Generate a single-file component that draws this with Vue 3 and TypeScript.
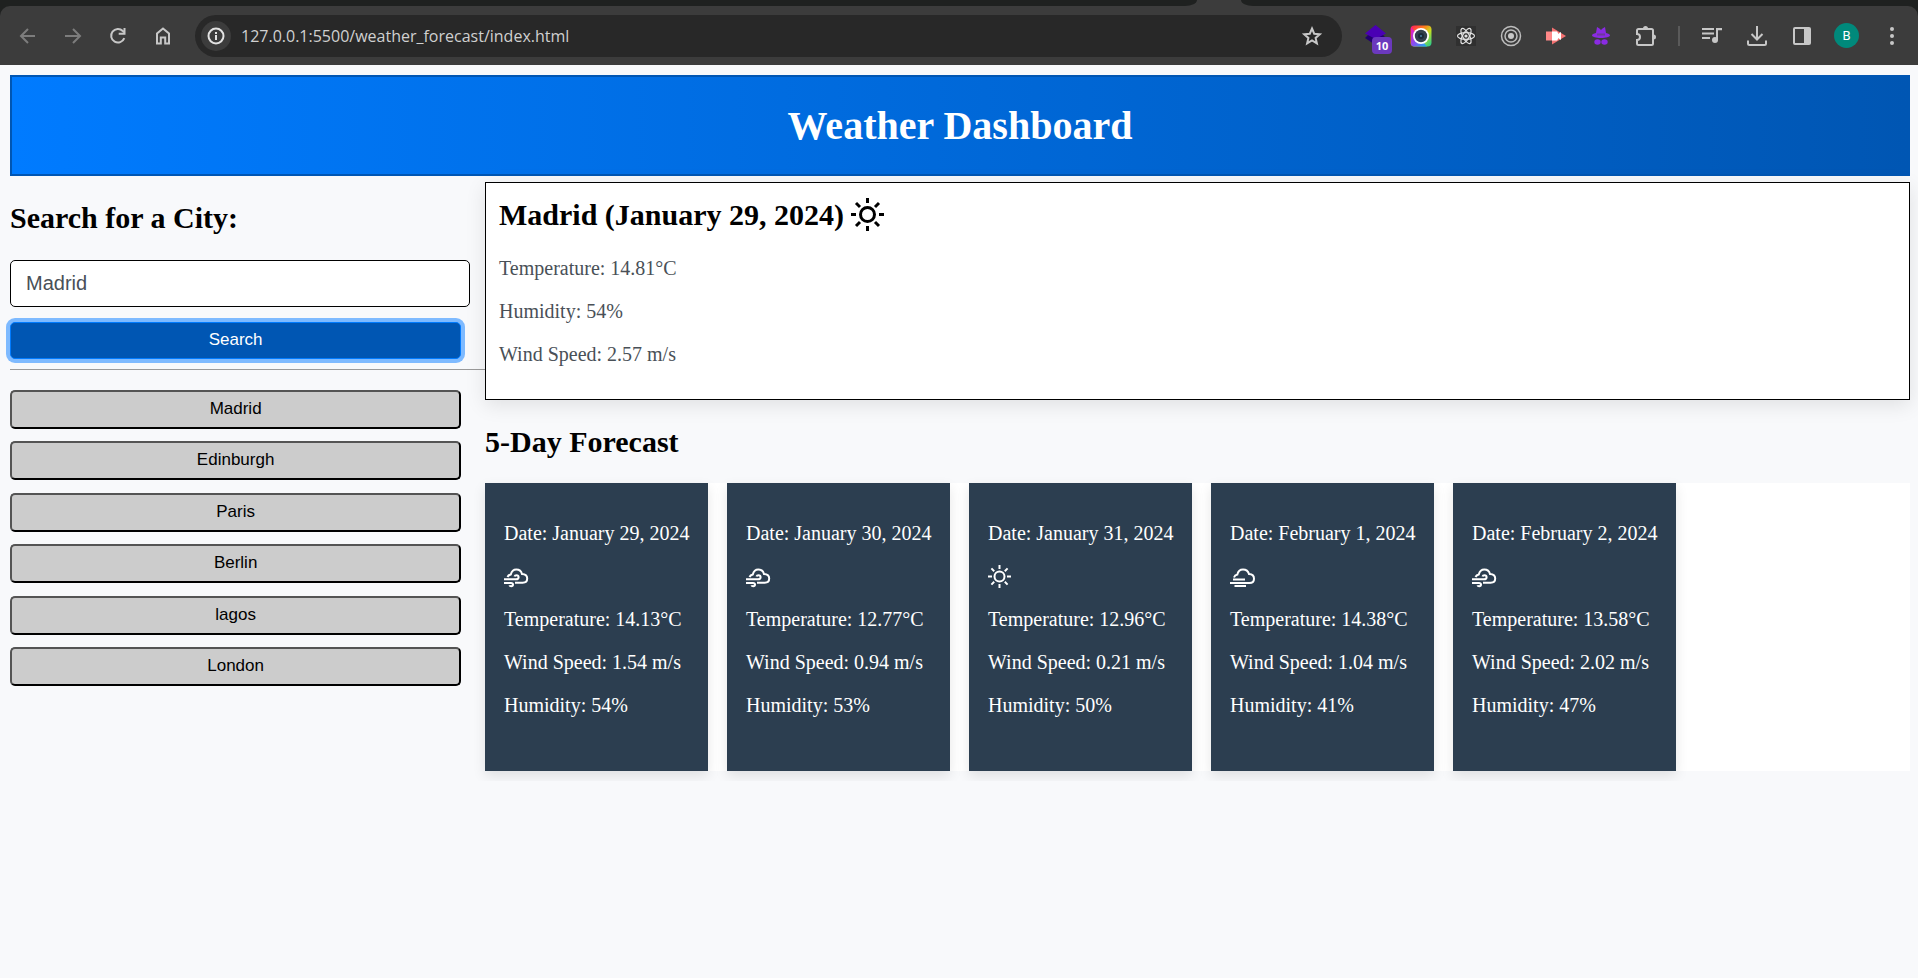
<script setup lang="ts">
import { ref } from 'vue'

type Sky = 'wind' | 'sun' | 'fog'

interface Day {
  date: string
  sky: Sky
  temp: string
  wind: string
  humidity: string
}

const address = ref('127.0.0.1:5500/weather_forecast/index.html')
const city = ref('Madrid')
const history = ref<string[]>(['Madrid', 'Edinburgh', 'Paris', 'Berlin', 'lagos', 'London'])

const days: Day[] = [
  { date: 'January 29, 2024', sky: 'wind', temp: '14.13', wind: '1.54', humidity: '54' },
  { date: 'January 30, 2024', sky: 'wind', temp: '12.77', wind: '0.94', humidity: '53' },
  { date: 'January 31, 2024', sky: 'sun', temp: '12.96', wind: '0.21', humidity: '50' },
  { date: 'February 1, 2024', sky: 'fog', temp: '14.38', wind: '1.04', humidity: '41' },
  { date: 'February 2, 2024', sky: 'wind', temp: '13.58', wind: '2.02', humidity: '47' },
]
</script>

<template>
  <div class="browser">
    <div class="tabs">
      <span class="tabs-left"></span>
      <span class="tabs-right"></span>
    </div>
    <nav class="toolbar" aria-label="Browser toolbar">
      <button class="tool dim" type="button" aria-label="Back">
        <svg width="20" height="20" viewBox="0 0 20 20"><path d="M17 10H3.500M10 3L3 10l7 7" class="line" /></svg>
      </button>
      <button class="tool dim" type="button" aria-label="Forward">
        <svg width="20" height="20" viewBox="0 0 20 20"><path d="M2 10h14.500M10 3l7 7-7 7" class="line" /></svg>
      </button>
      <button class="tool" type="button" aria-label="Reload">
        <svg width="20" height="20" viewBox="0 0 20 20"><path d="M16.300 12.200A6.800 6.800 0 1 1 14.800 5L16 6.200" class="line" /><path d="M17.500 2v6.800h-6.800v-2h4.800V2z" class="fill" /></svg>
      </button>
      <button class="tool" type="button" aria-label="Home">
        <svg width="20" height="20" viewBox="0 0 20 20"><path d="M4 17.500V7.500L10 2.500l6 5v10h-3.800v-6H7.800v6z" class="line" /></svg>
      </button>
      <div class="omnibox">
        <button class="site-info" type="button" aria-label="Site information">
          <svg width="18" height="18" viewBox="0 0 18 18"><circle cx="9" cy="9" r="7.500" class="line" /><path d="M8 8h2v5H8zM8 5h2v2H8z" class="fill" /></svg>
        </button>
        <input v-model="address" class="address" type="text" aria-label="Address" spellcheck="false" />
        <button class="star" type="button" aria-label="Bookmark">
          <svg width="22" height="22" viewBox="0 0 22 22"><path d="M11 3.500l2.200 5.200 5.600.5-4.200 3.700 1.300 5.500L11 15.500l-4.900 2.900 1.300-5.500-4.200-3.700 5.600-.5z" class="line" /></svg>
        </button>
      </div>
      <button class="tool ext" type="button" aria-label="Layers extension">
        <svg width="24" height="20" viewBox="0 0 24 20"><path d="M1 13l3-3h15l3 3-10.500 7z" fill="#22006f" /><path d="M11.500 0L22 8.500 11.500 14 1 8.500z" fill="#4a00b4" /></svg>
        <span class="badge">10</span>
      </button>
      <button class="tool" type="button" aria-label="Screen capture extension">
        <svg width="22" height="22" viewBox="0 0 22 22">
          <defs>
            <linearGradient id="lens-a" x1="0" y1="0" x2="1" y2="1"><stop offset="0" stop-color="#ff1a5e" /><stop offset=".35" stop-color="#ff7a1a" /><stop offset=".6" stop-color="#c6e020" /><stop offset="1" stop-color="#16c99a" /></linearGradient>
            <linearGradient id="lens-b" x1="0" y1="0" x2="1" y2="1"><stop offset="0" stop-color="#ff12b0" /><stop offset=".5" stop-color="#8a4cf0" /><stop offset="1" stop-color="#12b8f0" /></linearGradient>
          </defs>
          <rect x=".5" y=".5" width="21" height="21" rx="4" fill="url(#lens-a)" />
          <path d="M1 2v16.500a3 3 0 0 0 3 3h13z" fill="url(#lens-b)" />
          <circle cx="11" cy="11" r="8" fill="#fff" /><circle cx="11" cy="11" r="6.200" fill="#33404c" /><circle cx="11" cy="11" r="3" fill="#1c2a38" /><circle cx="11" cy="11" r="1" fill="#4a7ea0" />
        </svg>
      </button>
      <button class="tool" type="button" aria-label="React developer tools">
        <svg width="20" height="20" viewBox="0 0 20 20">
          <rect width="20" height="20" fill="#303030" />
          <g fill="none" stroke="#e2e2e2" stroke-width="1.200"><ellipse cx="10" cy="10" rx="8.500" ry="3.300" /><ellipse cx="10" cy="10" rx="8.500" ry="3.300" transform="rotate(60 10 10)" /><ellipse cx="10" cy="10" rx="8.500" ry="3.300" transform="rotate(120 10 10)" /></g>
          <circle cx="10" cy="10" r="1.600" fill="#e2e2e2" />
        </svg>
      </button>
      <button class="tool" type="button" aria-label="Rings extension">
        <svg width="22" height="22" viewBox="0 0 22 22"><g fill="none" stroke="#bdbdbd" stroke-width="1.500"><circle cx="11" cy="11" r="9.500" /><circle cx="11" cy="11" r="6" /></g><circle cx="11" cy="11" r="3" fill="#c8c8c8" /></svg>
      </button>
      <button class="tool" type="button" aria-label="Video extension">
        <svg width="22" height="20" viewBox="0 0 22 20"><path d="M7 1.500L21 10 7 18.500z" fill="#f47272" /><path d="M1 5.500h11v9H1z" fill="#f88" /><path d="M7 5.500h5l1 1.500v6l-1 1.500H7z" fill="#fff" /><path d="M13 8l3-2v8l-3-2z" fill="#fff" /></svg>
      </button>
      <button class="tool" type="button" aria-label="Incognito extension">
        <svg width="20" height="20" viewBox="0 0 20 20"><path d="M6 1l2.500 1.500L10 4l1.500-1.500L14 1l1 6c2.500.6 4 1.400 4 2.300 0 1.700-4 2.700-9 2.700s-9-1-9-2.700C1 8.400 2.500 7.600 5 7z" fill="#8a2be2" /><ellipse cx="6.500" cy="16" rx="3.200" ry="2.700" fill="#8a2be2" /><ellipse cx="13.500" cy="16" rx="3.200" ry="2.700" fill="#8a2be2" /><path d="M6 7.500h8v2H6z" fill="#6d3a9a" /></svg>
      </button>
      <button class="tool" type="button" aria-label="Extensions">
        <svg width="22" height="22" viewBox="0 0 22 22"><path d="M3.500 4h13a1.500 1.500 0 0 1 1.500 1.500v13a1.500 1.500 0 0 1-1.500 1.500h-13A1.500 1.500 0 0 1 2 18.500V15a3 3 0 0 0 0-6V5.500A1.500 1.500 0 0 1 3.500 4z" class="line" /><path d="M8 3.500a2.500 2.500 0 0 1 5 0zM18.500 9.500a2.500 2.500 0 0 1 0 5z" class="fill" /></svg>
      </button>
      <span class="divider"></span>
      <button class="tool" type="button" aria-label="Media controls">
        <svg width="22" height="20" viewBox="0 0 22 20"><path d="M1 3h12M1 7.500h12M1 12h8" class="line" /><path d="M15 2h6v2.200h-4V14h-2z" class="fill" /><circle cx="14" cy="14" r="3" class="fill" /></svg>
      </button>
      <button class="tool" type="button" aria-label="Downloads">
        <svg width="22" height="22" viewBox="0 0 22 22"><path d="M11 1v13M5.500 9l5.500 5.500L16.500 9M2 15.500v3A1.500 1.500 0 0 0 3.500 20h15a1.500 1.500 0 0 0 1.500-1.500v-3" class="line" /></svg>
      </button>
      <button class="tool" type="button" aria-label="Side panel">
        <svg width="20" height="20" viewBox="0 0 20 20"><rect x="2" y="2" width="16" height="16" rx="1" class="line" /><path d="M12 2h6v16h-6z" class="fill" /></svg>
      </button>
      <button class="tool" type="button" aria-label="Profile"><span class="avatar">B</span></button>
      <button class="tool" type="button" aria-label="Menu">
        <svg width="6" height="20" viewBox="0 0 6 20"><circle cx="3" cy="3" r="2" class="fill" /><circle cx="3" cy="10" r="2" class="fill" /><circle cx="3" cy="17" r="2" class="fill" /></svg>
      </button>
    </nav>
  </div>

  <div class="page">
    <header class="banner"><h1>Weather Dashboard</h1></header>
    <div class="columns">
      <aside class="sidebar">
        <form @submit.prevent>
          <h2><label for="city">Search for a City:</label></h2>
          <input id="city" v-model="city" class="city" type="text" />
          <button class="search" type="submit">Search</button>
        </form>
        <hr />
        <div class="history">
          <button v-for="name in history" :key="name" type="button" @click="city = name">{{ name }}</button>
        </div>
      </aside>

      <main class="content">
        <section class="today">
          <h2>
            Madrid (January 29, 2024)
            <svg class="today-icon" width="33" height="33" viewBox="0 0 33 33" fill="none" stroke="currentColor" stroke-width="3" aria-hidden="true">
              <circle cx="16.500" cy="16.500" r="7" /><path d="M16.500 0v5M16.500 28v5M0 16.500h5M28 16.500h5M5 5l4 4M24 24l4 4M28 5l-4 4M9 24l-4 4" />
            </svg>
          </h2>
          <p>Temperature: 14.81°C</p>
          <p>Humidity: 54%</p>
          <p>Wind Speed: 2.57 m/s</p>
        </section>

        <h2 class="forecast-title">5-Day Forecast</h2>
        <section class="forecast">
          <article v-for="day in days" :key="day.date" class="day">
            <p>Date: {{ day.date }}</p>
            <p class="sky">
              <svg v-if="day.sky === 'sun'" width="23" height="23" viewBox="0 0 23 23" aria-hidden="true">
                <circle cx="11.500" cy="11.500" r="5" /><path d="M11.500 0v4M11.500 19v4M0 11.500h4M19 11.500h4M3.400 3.400l2.800 2.800M16.800 16.800l2.800 2.800M19.600 3.400l-2.800 2.800M6.200 16.800l-2.800 2.800" />
              </svg>
              <svg v-else-if="day.sky === 'fog'" width="26" height="20" viewBox="0 0 26 20" aria-hidden="true">
                <path d="M4 9.500C4.500 8 5.500 7 7.300 6.600 8 3.500 10 1.500 13 1.500s5.200 1.600 6 4.600c3 .2 5 2 5 4.600 0 2.700-2 4.300-4.500 4.300H0M3 11.500h12M4.500 18H16" />
              </svg>
              <svg v-else width="26" height="20" viewBox="0 0 26 20" aria-hidden="true">
                <path d="M3.500 9C4.200 7.500 5 6.800 6.800 6.400 7.600 3.300 9.500 1.500 12.300 1.500c3 0 5 1.600 5.700 4.500 3.200.1 5.200 2 5.200 4.500 0 2.600-1.900 4.200-4.500 4.200H11M0 11.300h12c1.800 0 2.600-1 2.600-2.100S13.800 7.200 12.500 7.200c-1 0-1.800.4-2 1.200M0 15h7c1.300 0 2 .6 2 1.600s-.7 1.700-1.800 1.700c-.9 0-1.500-.3-1.700-1" />
              </svg>
            </p>
            <p>Temperature: {{ day.temp }}°C</p>
            <p>Wind Speed: {{ day.wind }} m/s</p>
            <p>Humidity: {{ day.humidity }}%</p>
          </article>
        </section>
      </main>
    </div>
  </div>
</template>

<style>
body {
  margin: 0;
  background: #f8f9fb;
}
</style>

<style scoped>
* {
  box-sizing: border-box;
}
button,
input {
  font-family: "Liberation Sans", Arial, sans-serif;
}

/* Browser chrome */
.browser {
  background: #1f2120;
  font-family: "Open Sans", sans-serif;
}
.tabs {
  display: flex;
  height: 6px;
  background: #3c3c3c;
}
.tabs-left,
.tabs-right {
  background: #1f2120;
}
.tabs-left {
  flex: 1197;
  border-bottom-right-radius: 12px 6px;
}
.tabs-right {
  flex: 677;
  margin-left: 44px;
  border-bottom-left-radius: 12px 6px;
}
.toolbar {
  display: flex;
  align-items: center;
  height: 59px;
  padding: 0 4px 0 5px;
  background: #3c3c3c;
  border-radius: 10px 10px 0 0;
}
.tool {
  position: relative;
  display: flex;
  flex: 0 0 45px;
  align-items: center;
  justify-content: center;
  height: 42px;
  padding: 0;
  border: 0;
  background: none;
  color: #c7c7c7;
}
.dim {
  color: #7d7d7d;
}
.line {
  fill: none;
  stroke: currentColor;
  stroke-width: 2;
}
.fill {
  fill: currentColor;
}
.omnibox {
  display: flex;
  flex: 1;
  align-items: center;
  height: 42px;
  margin: 0 11px 0 10px;
  padding: 0 19px 0 6px;
  border-radius: 21px;
  background: #282828;
}
.site-info {
  display: flex;
  align-items: center;
  justify-content: center;
  width: 30px;
  height: 30px;
  padding: 0;
  border: 0;
  border-radius: 50%;
  background: #3c3c3c;
  color: #e3e3e3;
}
.address {
  flex: 1;
  min-width: 0;
  padding: 0 10px;
  border: 0;
  outline: 0;
  background: none;
  color: #d0d0d0;
  font-family: "Open Sans", sans-serif;
  font-size: 16px;
  line-height: 24px;
}
.star {
  display: flex;
  padding: 0;
  border: 0;
  background: none;
  color: #c7c7c7;
}
.badge {
  position: absolute;
  left: 19px;
  bottom: 3px;
  width: 20px;
  height: 17px;
  border-radius: 4px;
  background: #6b39bd;
  color: #fff;
  font: bold 11px/18px "Open Sans", sans-serif;
  text-align: center;
}
.ext svg {
  margin-bottom: 2px;
}
.divider {
  flex: 0 0 2px;
  height: 20px;
  margin: 0 9px 0 10px;
  background: #5a5a5a;
}
.avatar {
  width: 25px;
  height: 25px;
  border-radius: 50%;
  background: #00897b;
  color: #fff;
  font: 13px/25px Roboto, sans-serif;
}

/* Dashboard */
.page {
  padding: 10px 8px 10px 10px;
  font-family: "Liberation Serif", "Times New Roman", serif;
  font-size: 20px;
  line-height: 23px;
  color: #000;
}
.banner {
  padding: 26px 0 25px;
  border: 2px solid #0056b3;
  background: linear-gradient(to right, #007bff, #0056b3);
  color: #fff;
  text-align: center;
}
h1 {
  margin: 0;
  font-size: 40px;
  line-height: 46px;
}
h2 {
  margin: 0 0 25px;
  font-size: 30px;
  line-height: 34px;
}
p {
  margin: 20px 0;
}
.columns {
  display: flex;
  align-items: flex-start;
}
.sidebar {
  flex: 0 0 25%;
  padding-top: 25px;
}
form {
  display: flex;
  flex-direction: column;
  align-items: flex-start;
}
.city {
  width: calc(100% - 15px);
  height: 47px;
  margin-bottom: 15px;
  padding: 0 15px;
  border: 1px solid #000;
  border-radius: 5px;
  background: #fff;
  color: #495057;
  font-size: 20px;
}
.search {
  width: 95%;
  height: 37px;
  padding: 0 0 2px;
  border: 1px solid #007bff;
  border-radius: 5px;
  background: #0056b3;
  box-shadow: 0 0 0 4px #7ebaff;
  color: #fff;
  font-size: 17px;
}
hr {
  height: 1px;
  margin: 10px 0 20px;
  border: 0;
  background: #9a9a9a;
}
.history {
  display: flex;
  flex-direction: column;
  justify-content: space-between;
  min-height: 296px;
}
.history button {
  width: 95%;
  height: 39px;
  padding: 0 0 1px;
  border: 2px outset #000;
  border-radius: 5px;
  background: #ccc;
  color: #000;
  font-size: 17px;
}
.content {
  flex: 1;
  min-width: 0;
  padding-top: 6px;
}
.today {
  position: relative;
  padding: 15px 13px 13px;
  border: 1px solid #000;
  background: #fff;
  box-shadow: 0 5px 19px rgba(0, 0, 0, 0.1);
  color: #495057;
}
.today h2 {
  display: flex;
  align-items: flex-start;
  gap: 7px;
  color: #000;
}
.forecast-title {
  margin: 25px 0 24px;
}
.forecast {
  display: flex;
  gap: 19px;
  background: #fff;
}
.day {
  flex: 0 0 223px;
  padding: 0 18px 34px 19px;
  border-top: 19px solid #2c3e50;
  background: #2c3e50;
  box-shadow: 0 5px 12px rgba(0, 0, 0, 0.1);
  color: #fff;
  white-space: nowrap;
}
.sky {
  display: flex;
  height: 23px;
  align-items: flex-end;
}
.sky svg {
  fill: none;
  stroke: currentColor;
  stroke-width: 2;
}
</style>
